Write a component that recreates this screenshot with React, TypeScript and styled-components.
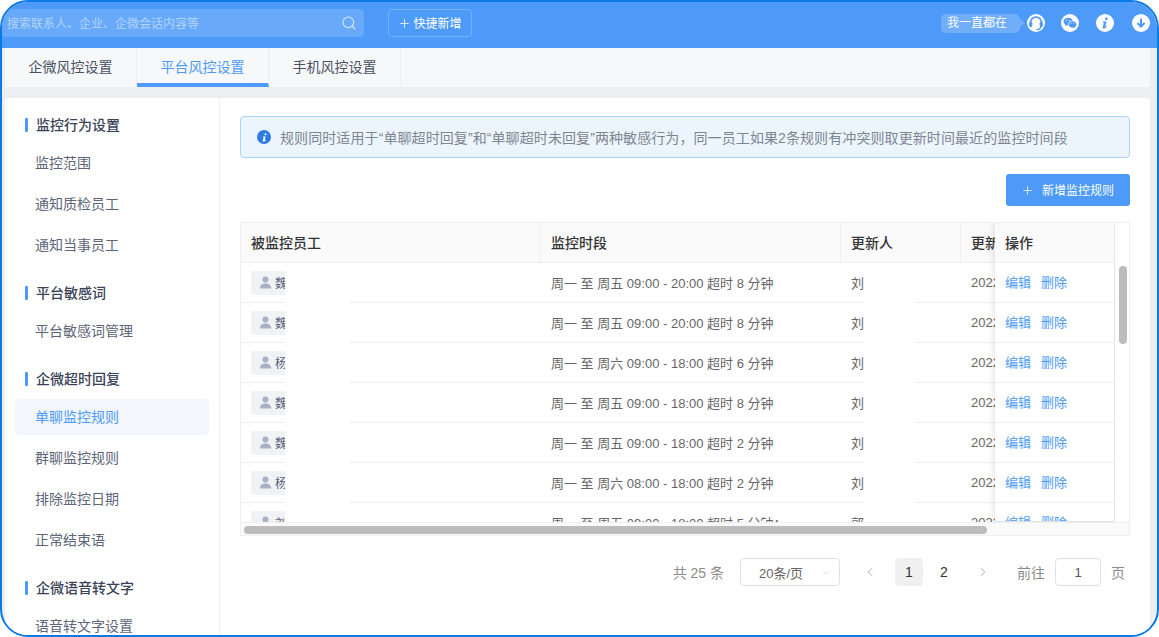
import styled, { createGlobalStyle } from "styled-components";
import { RiWechatFill } from "react-icons/ri";
import { Search, Plus, ChevronLeft, ChevronRight, ChevronDown } from "lucide-react";

const GlobalStyle = createGlobalStyle`
  html, body {
    margin: 0;
    background: #fff;
    font-family: "Liberation Sans", "Noto Sans CJK SC", sans-serif;
  }
  * { box-sizing: border-box; }
`;

const Window = styled.div`
  width: 1159px;
  height: 637px;
  border: 2px solid #0a7be6;
  border-radius: 28px;
  overflow: hidden;
  display: flex;
  flex-direction: column;
  background: #edeef1;
`;

const Header = styled.header`
  height: 46px;
  flex: none;
  display: flex;
  align-items: flex-start;
  padding-top: 7px;
  background: #4d9af8;
`;

const SearchBox = styled.div`
  width: 362px;
  height: 28px;
  display: flex;
  align-items: center;
  justify-content: space-between;
  padding: 0 7px 2px 5px;
  border-radius: 4px;
  background: #68a9f9;
  font-size: 12px;
  color: #b4d4fb;
  svg { color: #dcebfd; margin-top: 2px; }
`;

const QuickAdd = styled.button`
  width: 84px;
  height: 28px;
  margin-left: 24px;
  display: flex;
  align-items: center;
  justify-content: center;
  gap: 2px;
  padding: 0 0 2px;
  border: 1px solid #75b0fa;
  border-radius: 4px;
  background: transparent;
  color: #fff;
  font: inherit;
  font-size: 12px;
  svg { margin-top: 2px; }
`;

const HeaderRight = styled.div`
  margin-left: auto;
  height: 28px;
  display: flex;
  align-items: center;
  padding-right: 7px;
`;

const Bubble = styled.div`
  position: relative;
  width: 79px;
  height: 19px;
  margin-right: 7px;
  padding-left: 6px;
  border-radius: 5px;
  background: #71aefa;
  color: #fff;
  font-size: 12px;
  line-height: 18px;
  &::after {
    content: "";
    position: absolute;
    right: -5px;
    top: 5px;
    border-left: 5px solid #71aefa;
    border-top: 4px solid transparent;
    border-bottom: 4px solid transparent;
  }
`;

const RoundIcon = styled.span`
  width: 18px;
  height: 18px;
  margin-left: ${(p) => p.$gap}px;
  display: flex;
  align-items: center;
  justify-content: center;
  border-radius: 50%;
  background: #fff;
  color: #4d9af8;
`;

const TabBar = styled.nav`
  height: 39px;
  flex: none;
  display: flex;
  margin: 0 7px 11px 3px;
  background: #f7f8fa;
`;

const Tab = styled.div`
  width: 132px;
  display: flex;
  align-items: center;
  justify-content: center;
  border-right: 1px solid #edeef1;
  border-bottom: 4px solid ${(p) => (p.$active ? "#4d9af8" : "transparent")};
  padding-top: 1px;
  font-size: 14px;
  color: ${(p) => (p.$active ? "#4d9af8" : "#4a5163")};
`;

const Panel = styled.div`
  flex: 1;
  min-height: 0;
  display: flex;
  margin: 0 7px 0 3px;
  border-radius: 4px 4px 0 0;
  background: #fff;
`;

const Sidebar = styled.aside`
  width: 215px;
  flex: none;
  padding: 15px 10px 0;
  border-right: 1px solid #edeef1;
`;

const Section = styled.div`
  margin-bottom: 18px;
`;

const SectionTitle = styled.div`
  height: 24px;
  margin-bottom: 8px;
  display: flex;
  align-items: center;
  gap: 8px;
  padding: 0 0 2px 10px;
  font-size: 14px;
  font-weight: 500;
  color: #3a4257;
  &::before {
    content: "";
    width: 3px;
    height: 14px;
    margin-top: 2px;
    border-radius: 1px;
    background: #4d9af8;
  }
`;

const NavItem = styled.div`
  height: 36px;
  margin-bottom: 5px;
  display: flex;
  align-items: center;
  padding: 0 0 2px 20px;
  border-radius: 4px;
  font-size: 14px;
  color: ${(p) => (p.$active ? "#4d9af8" : "#5d6578")};
  background: ${(p) => (p.$active ? "#f3f6fa" : "transparent")};
`;

const Main = styled.main`
  flex: 1;
  min-width: 0;
  padding: 18px 20px 0;
`;

const Notice = styled.div`
  height: 42px;
  display: flex;
  align-items: center;
  gap: 9px;
  padding: 0 0 0 16px;
  border: 1px solid #a9d3fa;
  border-radius: 4px;
  background: #ecf5fd;
  font-size: 14px;
  letter-spacing: 0.09px;
  color: #7d8592;
  white-space: nowrap;
`;

const ActionBar = styled.div`
  display: flex;
  justify-content: flex-end;
  margin: 16px 0;
`;

const PrimaryButton = styled.button`
  width: 124px;
  height: 32px;
  display: flex;
  align-items: center;
  justify-content: center;
  gap: 8px;
  padding: 0 1px 2px 0;
  border: 0;
  border-radius: 3px;
  background: #4d9af8;
  color: #fff;
  font: inherit;
  font-size: 12px;
  svg { margin-top: 2px; }
`;

const TableFrame = styled.div`
  height: 314px;
  display: grid;
  grid-template-columns: 874px 14px;
  grid-template-rows: 299px 13px;
  border: 1px solid #eeeff1;
`;

const Scroller = styled.div`
  position: relative;
  overflow: hidden;
`;

const HeadRow = styled.div`
  height: 40px;
  display: grid;
  grid-template-columns: 300px 300px 120px 180px;
  width: 900px;
  border-bottom: 1px solid #eeeff1;
  background: #fafafa;
`;

const HeadCell = styled.div`
  display: flex;
  align-items: center;
  padding: 0 0 2px 10px;
  border-right: 1px solid #eeeff1;
  font-size: 14px;
  font-weight: 500;
  color: #333;
  white-space: nowrap;
  overflow: hidden;
`;

const Row = styled.div`
  height: 40px;
  display: grid;
  grid-template-columns: 300px 300px 120px 180px;
  width: 900px;
  border-bottom: 1px solid #eeeff1;
`;

const Cell = styled.div`
  display: flex;
  align-items: center;
  padding-left: 10px;
  font-size: 13px;
  color: #666;
  white-space: nowrap;
  overflow: hidden;
`;

const CellText = styled.span`
  margin-top: -1px;
`;

const UserTag = styled.span`
  width: 66px;
  height: 24px;
  display: flex;
  align-items: center;
  gap: 3px;
  padding-left: 8px;
  border-radius: 3px;
  background: #f0f2f5;
  color: #59617a;
  font-size: 12px;
`;

const Redaction = styled.div`
  position: absolute;
  top: 47px;
  bottom: 0;
  left: ${(p) => p.$left}px;
  width: ${(p) => p.$width}px;
  background: #fff;
`;

const FixedColumn = styled.div`
  position: absolute;
  top: 0;
  right: 0;
  bottom: 0;
  width: 120px;
  overflow: hidden;
  background: #fff;
  border-right: 1px solid #e6e6e6;
  border-bottom: 1px solid #e2e2e2;
  box-shadow: -2px 0 6px rgba(0, 0, 0, 0.1);
`;

const FixedHead = styled.div`
  height: 40px;
  display: flex;
  align-items: center;
  padding: 0 0 2px 10px;
  border-bottom: 1px solid #eeeff1;
  background: #fafafa;
  font-size: 14px;
  font-weight: 500;
  color: #333;
`;

const FixedCell = styled.div`
  height: 40px;
  display: flex;
  align-items: center;
  gap: 10px;
  padding: 0 0 2px 10px;
  border-bottom: 1px solid #eeeff1;
  font-size: 13px;
  color: #4d9af8;
`;

const VScroll = styled.div`
  padding: 43px 2px 0 4px;
  background: #fff;
  &::before {
    content: "";
    display: block;
    width: 8px;
    height: 78px;
    border-radius: 4px;
    background: #bcbcbc;
  }
`;

const HScroll = styled.div`
  grid-column: 1 / 3;
  padding: 3px 0 0 3px;
  border-top: 1px solid #eeeff1;
  background: #fafafa;
  &::before {
    content: "";
    display: block;
    width: 743px;
    height: 8px;
    border-radius: 4px;
    background: #bcbcbc;
  }
`;

const Pager = styled.div`
  margin-top: 22px;
  height: 28px;
  display: flex;
  align-items: center;
  justify-content: flex-end;
  padding-right: 5px;
  font-size: 14px;
  color: #8c8c8c;
`;

const Total = styled.span`
  margin-right: 16px;
`;

const PageSize = styled.div`
  width: 100px;
  height: 28px;
  display: flex;
  align-items: center;
  justify-content: space-between;
  padding: 0 6px 0 18px;
  border: 1px solid #dfe1e6;
  border-radius: 4px;
  font-size: 13px;
  color: #666;
  svg { color: #c5c7cc; }
`;

const PageArrow = styled.span`
  width: 28px;
  height: 28px;
  display: flex;
  align-items: center;
  justify-content: center;
  color: #8c8c8c;
  margin: ${(p) => p.$margin};
`;

const PageNum = styled.span`
  width: 28px;
  height: 28px;
  margin-right: ${(p) => (p.$current ? 7 : 0)}px;
  display: flex;
  align-items: center;
  justify-content: center;
  border-radius: 4px;
  background: ${(p) => (p.$current ? "#f0f0f0" : "transparent")};
  color: #333;
  font-size: 14px;
`;

const JumpInput = styled.div`
  width: 46px;
  height: 28px;
  margin: 0 10px;
  display: flex;
  align-items: center;
  justify-content: center;
  border: 1px solid #dfe1e6;
  border-radius: 4px;
  font-size: 13px;
  color: #555;
`;

const UserIcon = () => (
  <svg width="13" height="13" viewBox="0 0 13 13" fill="#aab2c5">
    <circle cx="6.5" cy="3.6" r="3" />
    <path d="M.8 12.5c0-3.2 2.4-5 5.7-5s5.7 1.8 5.7 5z" />
  </svg>
);

const HeadsetIcon = () => (
  <svg width="16" height="16" viewBox="0 0 14 14" fill="none" stroke="currentColor">
    <path d="M2.2 8.5V6.6a4.8 4.8 0 0 1 9.6 0v1.9" strokeWidth="1.5" />
    <rect x="1" y="6.2" width="2.8" height="4.2" rx="1" fill="currentColor" stroke="none" />
    <rect x="10.2" y="6.2" width="2.8" height="4.2" rx="1" fill="currentColor" stroke="none" />
    <path d="M11.4 10.2c-.4 1.7-2 2.6-4 2.6" strokeWidth="1.2" />
  </svg>
);

const InfoMark = ({ size = 12 }: { size?: number }) => (
  <svg width={size} height={size} viewBox="0 0 12 12" fill="currentColor">
    <circle cx="7.4" cy="1.8" r="1.4" />
    <path d="M4.2 4.6h3.4L6.3 9.4c-.1.4.3.5 1.3-.3l.3.5c-1 1.2-2 1.9-3 1.9-1 0-1.4-.6-1.1-1.6l1-3.7c.1-.5-.2-.7-.9-.7z" />
  </svg>
);

const ArrowIcon = () => (
  <svg width="12" height="12" viewBox="0 0 12 12" fill="none" stroke="currentColor" strokeWidth="2">
    <path d="M6 1.5v8M2.4 6 6 9.6 9.6 6" />
  </svg>
);

const NoticeIcon = styled.span`
  width: 14px;
  height: 14px;
  display: flex;
  align-items: center;
  justify-content: center;
  border-radius: 50%;
  background: #2f7ce0;
  color: #fff;
`;

const navGroups = [
  { title: "监控行为设置", items: ["监控范围", "通知质检员工", "通知当事员工"] },
  { title: "平台敏感词", items: ["平台敏感词管理"] },
  { title: "企微超时回复", items: ["单聊监控规则", "群聊监控规则", "排除监控日期", "正常结束语"] },
  { title: "企微语音转文字", items: ["语音转文字设置"] },
];

const rows = [
  { tag: "魏", time: "周一 至 周五 09:00 - 20:00 超时 8 分钟", by: "刘" },
  { tag: "魏", time: "周一 至 周五 09:00 - 20:00 超时 8 分钟", by: "刘" },
  { tag: "杨", time: "周一 至 周六 09:00 - 18:00 超时 6 分钟", by: "刘" },
  { tag: "魏", time: "周一 至 周五 09:00 - 18:00 超时 8 分钟", by: "刘" },
  { tag: "魏", time: "周一 至 周五 09:00 - 18:00 超时 2 分钟", by: "刘" },
  { tag: "杨", time: "周一 至 周六 08:00 - 18:00 超时 2 分钟", by: "刘" },
  { tag: "刘", time: "周一 至 周五 09:00 - 18:00 超时 5 分钟；", by: "郭" },
];

export default function App() {
  return (
    <>
      <GlobalStyle />
      <Window>
        <Header>
          <SearchBox>
            搜索联系人、企业、企微会话内容等
            <Search size={16} strokeWidth={1.6} />
          </SearchBox>
          <QuickAdd>
            <Plus size={13} strokeWidth={1.5} />
            快捷新增
          </QuickAdd>
          <HeaderRight>
            <Bubble>我一直都在</Bubble>
            <RoundIcon $gap={0}><HeadsetIcon /></RoundIcon>
            <RoundIcon $gap={16}><RiWechatFill size={14} /></RoundIcon>
            <RoundIcon $gap={17}><InfoMark /></RoundIcon>
            <RoundIcon $gap={18}><ArrowIcon /></RoundIcon>
          </HeaderRight>
        </Header>

        <TabBar>
          <Tab>企微风控设置</Tab>
          <Tab $active>平台风控设置</Tab>
          <Tab>手机风控设置</Tab>
        </TabBar>

        <Panel>
          <Sidebar>
            {navGroups.map((group) => (
              <Section key={group.title}>
                <SectionTitle>{group.title}</SectionTitle>
                {group.items.map((item) => (
                  <NavItem key={item} $active={item === "单聊监控规则"}>{item}</NavItem>
                ))}
              </Section>
            ))}
          </Sidebar>

          <Main>
            <Notice>
              <NoticeIcon><InfoMark size={9} /></NoticeIcon>
              规则同时适用于“单聊超时回复”和“单聊超时未回复”两种敏感行为，同一员工如果2条规则有冲突则取更新时间最近的监控时间段
            </Notice>

            <ActionBar>
              <PrimaryButton>
                <Plus size={13} strokeWidth={1.5} />
                新增监控规则
              </PrimaryButton>
            </ActionBar>

            <TableFrame>
              <Scroller>
                <HeadRow>
                  <HeadCell>被监控员工</HeadCell>
                  <HeadCell>监控时段</HeadCell>
                  <HeadCell>更新人</HeadCell>
                  <HeadCell>更新时间</HeadCell>
                </HeadRow>
                {rows.map((row, i) => (
                  <Row key={i}>
                    <Cell><UserTag><UserIcon />{row.tag}</UserTag></Cell>
                    <Cell><CellText>{row.time}</CellText></Cell>
                    <Cell><CellText>{row.by}</CellText></Cell>
                    <Cell><CellText>2022-10-12 10:30:21</CellText></Cell>
                  </Row>
                ))}
                <Redaction $left={44} $width={65} />
                <Redaction $left={624} $width={50} />
                <FixedColumn>
                  <FixedHead>操作</FixedHead>
                  {rows.map((_, i) => (
                    <FixedCell key={i}><span>编辑</span><span>删除</span></FixedCell>
                  ))}
                </FixedColumn>
              </Scroller>
              <VScroll />
              <HScroll />
            </TableFrame>

            <Pager>
              <Total>共 25 条</Total>
              <PageSize>20条/页<ChevronDown size={13} strokeWidth={1} /></PageSize>
              <PageArrow $margin="0 11px 0 16px"><ChevronLeft size={14} strokeWidth={1.2} /></PageArrow>
              <PageNum $current>1</PageNum>
              <PageNum>2</PageNum>
              <PageArrow $margin="0 20px 0 11px"><ChevronRight size={14} strokeWidth={1.2} /></PageArrow>
              前往
              <JumpInput>1</JumpInput>
              页
            </Pager>
          </Main>
        </Panel>
      </Window>
    </>
  );
}
